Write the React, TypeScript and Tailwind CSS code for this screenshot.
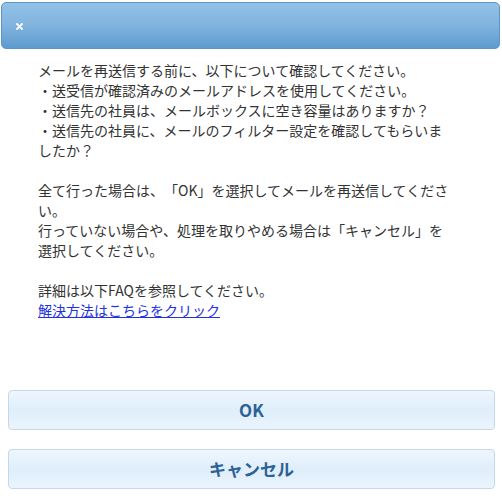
import React from "react";

export default function App() {
  const font = { fontFamily: '"Noto Sans CJK JP", "Noto Sans", sans-serif' };
  return (
    <div className="w-[502px] h-[501px] bg-white overflow-hidden [text-spacing-trim:space-all]" style={font}>
      <div className="pt-[2px] px-[1px] pr-[2px]">
        <div className="h-[47px] rounded-[5px] border border-[#5b95c9] bg-gradient-to-b from-[#93c2e7] via-[#80b3de] to-[#5d9bcf] flex items-center pl-[14px]">
          <svg width="7" height="7" viewBox="0 0 7 7" className="mt-[1px]">
            <path d="M1 1 L6 6 M6 1 L1 6" stroke="#f4f8fc" strokeWidth="2" strokeLinecap="round" />
          </svg>
        </div>
      </div>
      <div className="pl-[38px] pt-[11px] w-[456px] text-[14px] leading-[20px] text-[#333333]">
        <p>メールを再送信する前に、以下について確認してください。</p>
        <p>・送受信が確認済みのメールアドレスを使用してください。</p>
        <p>・送信先の社員は、メールボックスに空き容量はありますか？</p>
        <p>・送信先の社員に、メールのフィルター設定を確認してもらいましたか？</p>
        <p className="h-[20px]"></p>
        <p>全て行った場合は、「OK」を選択してメールを再送信してください。</p>
        <p>行っていない場合や、処理を取りやめる場合は「キャンセル」を選択してください。</p>
        <p className="h-[20px]"></p>
        <p>詳細は以下FAQを参照してください。</p>
        <a href="#" className="text-[#2233dd] underline">解決方法はこちらをクリック</a>
      </div>
      <div className="mt-[70px] px-[8px] pr-[7px] flex flex-col gap-[19px]">
        <button className="h-[40px] w-full rounded-[4px] border border-[#c6d8e8] bg-gradient-to-b from-[#eef6fd] via-[#dfeefb] to-[#eaf4fd] text-[#2c6295] text-[17px] font-bold">
          OK
        </button>
        <button className="h-[40px] w-full rounded-[4px] border border-[#c6d8e8] bg-gradient-to-b from-[#eef6fd] via-[#dfeefb] to-[#eaf4fd] text-[#2c6295] text-[17px] font-bold">
          キャンセル
        </button>
      </div>
    </div>
  );
}
